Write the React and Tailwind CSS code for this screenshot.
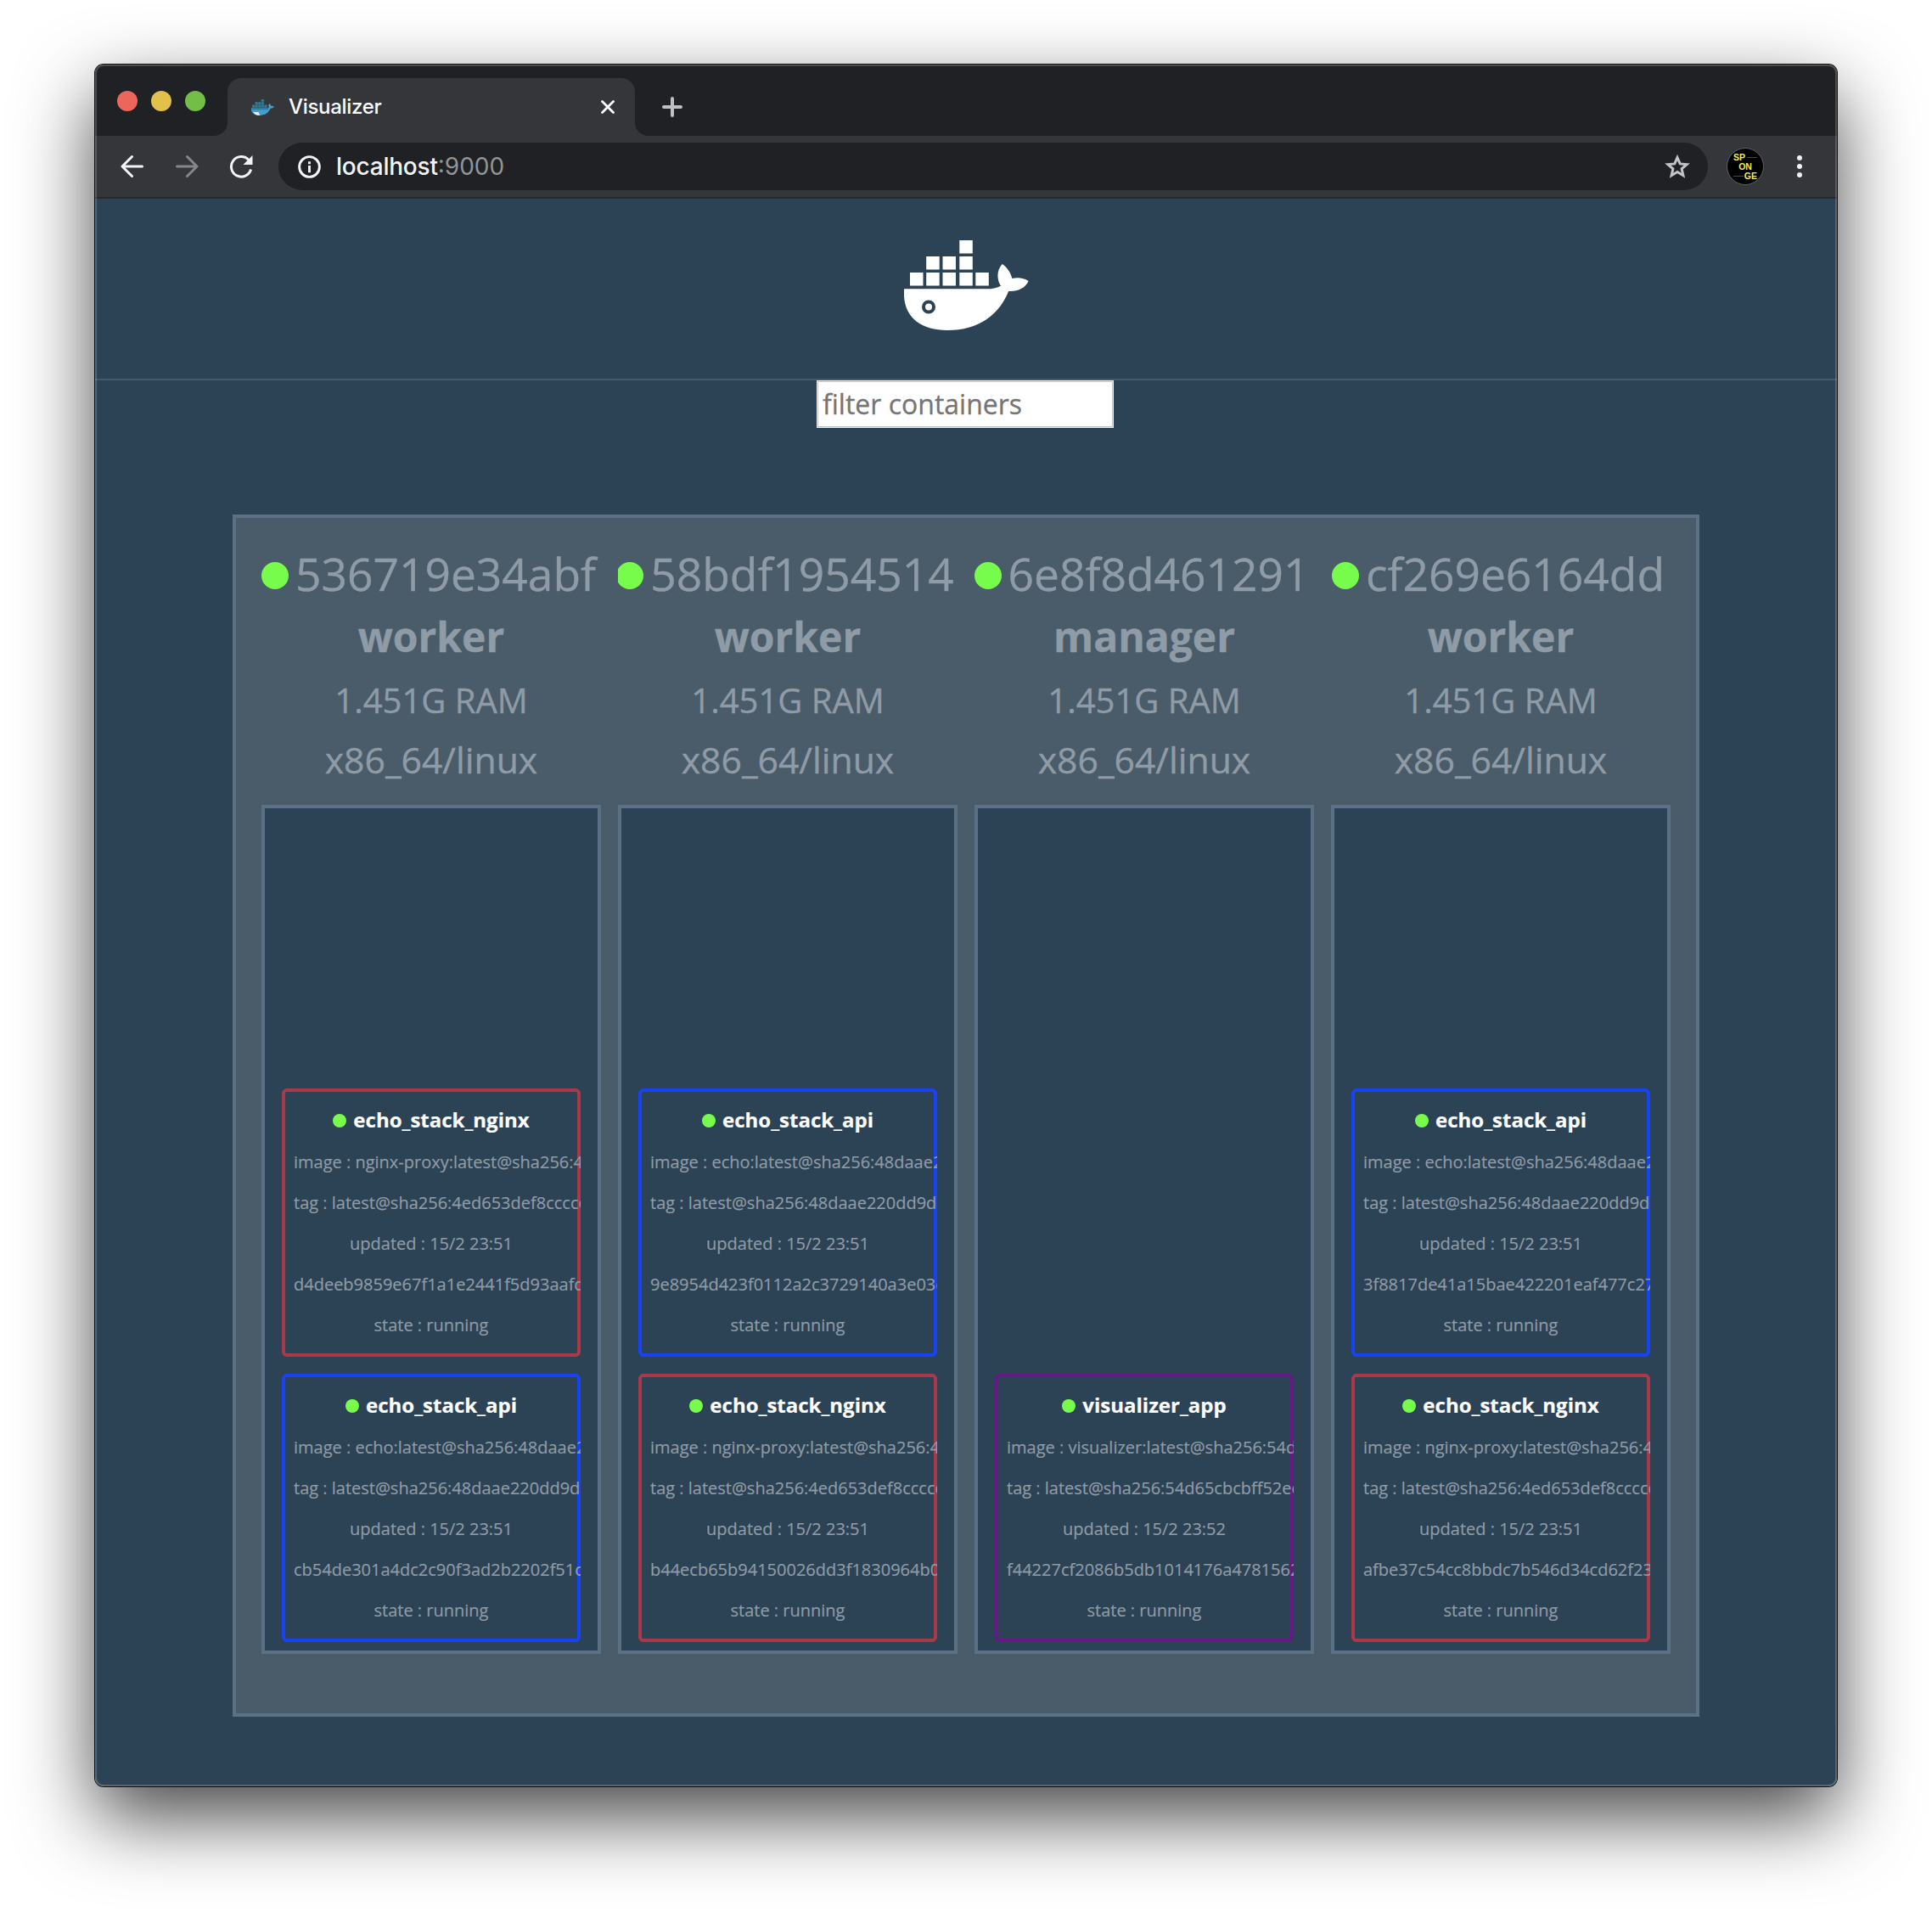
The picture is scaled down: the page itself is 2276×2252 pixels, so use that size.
import React from "react";

const RED = "inset-ring-[#a93a4c]";
const BLUE = "inset-ring-[#1742f5]";
const PURPLE = "inset-ring-[#651886]";

const nginx = (id) => ({
  name: "echo_stack_nginx", color: RED, image: "nginx-proxy:latest@sha256:4ed6",
  tag: "latest@sha256:4ed653def8cccce0", updated: "15/2 23:51", id,
});
const api = (id) => ({
  name: "echo_stack_api", color: BLUE, image: "echo:latest@sha256:48daae220d",
  tag: "latest@sha256:48daae220dd9db1", updated: "15/2 23:51", id,
});

const nodes = [
  { host: "536719e34abf", role: "worker", tasks: [nginx("d4deeb9859e67f1a1e2441f5d93aafc0"), api("cb54de301a4dc2c90f3ad2b2202f51c8")] },
  { host: "58bdf1954514", role: "worker", tasks: [api("9e8954d423f0112a2c3729140a3e03c1"), nginx("b44ecb65b94150026dd3f1830964b0a2")] },
  {
    host: "6e8f8d461291", role: "manager",
    tasks: [{ name: "visualizer_app", color: PURPLE, image: "visualizer:latest@sha256:54d65c", tag: "latest@sha256:54d65cbcbff52ec0", updated: "15/2 23:52", id: "f44227cf2086b5db1014176a4781562b" }],
  },
  { host: "cf269e6164dd", role: "worker", tasks: [api("3f8817de41a15bae422201eaf477c27e"), nginx("afbe37c54cc8bbdc7b546d34cd62f23b")] },
];

function Task({ task }) {
  return (
    <div className={`h-[316px] w-[352px] shrink-0 overflow-hidden rounded-[6px] px-[14px] pt-[13px] text-left text-[20px] leading-[48px] text-[#8f9ba6] inset-ring-4 [-webkit-text-stroke:0.2px] ${task.color}`}>
      <div className="mb-px flex h-[49px] items-center justify-center gap-2 text-[24px] font-bold text-white">
        <span className="size-4 shrink-0 rounded-full bg-[#77fc4c]" />
        <span className="-mt-[2px]">{task.name}</span>
      </div>
      <div className="whitespace-nowrap">image : {task.image}</div>
      <div className="whitespace-nowrap">tag : {task.tag}</div>
      <div className="text-center">updated : {task.updated}</div>
      <div className="whitespace-nowrap">{task.id}</div>
      <div className="text-center">state : running</div>
    </div>
  );
}

function Node({ node }) {
  return (
    <div className="flex w-[400px] flex-col text-center text-[#8f9ba6] [-webkit-text-stroke:0.4px]">
      <div className="flex h-[72px] items-center justify-center gap-2 overflow-hidden pr-[6px] text-[53.330px] leading-[72px]">
        <span className="mt-1 size-8 shrink-0 rounded-full bg-[#77fc4c]" />
        <span>{node.host}</span>
      </div>
      <div className="h-[77px] text-[48px] leading-[76px] font-bold">{node.role}</div>
      <div className="h-[71px] text-[40px] leading-[72px]">1.451G RAM</div>
      <div className="h-[88px] text-[42.670px] leading-[70px]">x86_64/linux</div>
      <div className="flex h-[1000px] flex-col items-center justify-end gap-5 border-4 border-[#5a7186] bg-[#2c4255] pb-[10px]">
        {node.tasks.map((t) => <Task key={t.id} task={t} />)}
      </div>
    </div>
  );
}

const CONTAINERS = "M65.300 0h15.500v15.500h-15.500z M26.200 19h15.500v15.500h-15.500z M45.500 19h15.500v15.500h-15.500z M65.300 19h15.500v15.500h-15.500z M7 38h15.500v15.500h-15.500z M26.200 38h15.500v15.500h-15.500z M45.500 38h15.500v15.500h-15.500z M65.300 38h15.500v15.500h-15.500z M84.300 38h15.500v15.500h-15.500z";
const BODY = "M.1 57.300H98c6 0 10.500-1 16-3.600c-5-8-5-18 1.600-25.700c6 4 10 10 11.800 17c6-1.500 14-.8 19.200 3c-3.500 8-12 12.500-23.500 12C112 88 88 106 51 106C19 106-2.400 90 .1 57.300z";
const EYE = "M29 70.500a8 8 0 1 0 0 16a8 8 0 1 0 0-16zM29 74.500a4 4 0 1 1 0 8a4 4 0 1 1 0-8z";

function Logo() {
  return (
    <svg className="h-[107px] w-[147px] text-white" viewBox="0 0 147 107" fill="currentColor">
      <path d={CONTAINERS} />
      <path fillRule="evenodd" d={BODY + EYE} />
    </svg>
  );
}

function Favicon() {
  return (
    <svg className="h-[19px] w-[27px]" viewBox="0 0 147 107" preserveAspectRatio="none">
      <path d={CONTAINERS} fill="#3b8199" stroke="#2f6b80" strokeWidth="4" />
      <path d={BODY} fill="#429fd2" />
      <path d="M3 57h108l-4 12H3z" fill="#2c7a9d" />
      <path d="M12 84c12 2 26 1 34 0c2 8 6 16 12 22C36 108 20 98 12 84z" fill="#e8f1f5" />
    </svg>
  );
}

function TabStrip() {
  return (
    <div className="flex h-[84px] items-end bg-[#202124]">
      <div className="flex h-[84px] w-[156px] gap-4 pt-[31px] pl-[26px]">
        <span className="size-6 rounded-full bg-[#ed665c]" />
        <span className="size-6 rounded-full bg-[#e1c04c]" />
        <span className="size-6 rounded-full bg-[#72be47]" />
      </div>
      <div className="relative flex h-[68px] w-[480px] items-center rounded-t-2xl bg-[#35363a] pl-7 text-white">
        <svg className="absolute bottom-0 -left-4 size-4" viewBox="0 0 16 16" fill="#35363a"><path d="M16 0v16H0A16 16 0 0 0 16 0z" /></svg>
        <svg className="absolute -right-4 bottom-0 size-4" viewBox="0 0 16 16" fill="#35363a"><path d="M0 0v16h16A16 16 0 0 1 0 0z" /></svg>
        <Favicon />
        <span className="ml-[17px] grow font-[Inter] text-[24px] font-medium tracking-[-0.013em]">Visualizer</span>
        <svg className="mr-6 size-4" viewBox="0 0 16 16" fill="none" stroke="currentColor" strokeWidth="2.800" strokeLinecap="round"><path d="M1.500 1.500l13 13M14.500 1.500l-13 13" /></svg>
      </div>
      <svg className="mb-[22px] ml-8 size-6" viewBox="0 0 24 24" fill="none" stroke="#bdc1c6" strokeWidth="4" strokeLinecap="round"><path d="M12 2v20M2 12h20" /></svg>
    </div>
  );
}

function Toolbar() {
  return (
    <div className="flex h-[74px] items-center border-b-2 border-[#28292c] bg-[#35363a] text-[#f1f3f4]">
      <svg className="ml-[30px] size-[28px]" viewBox="0 0 28 28" fill="none" stroke="currentColor" strokeWidth="3" strokeLinecap="round" strokeLinejoin="round"><path d="M25.500 14H2.500M13.500 2.500L2 14l11.500 11.500" /></svg>
      <svg className="ml-[36px] size-[28px]" viewBox="0 0 28 28" fill="none" stroke="#85868a" strokeWidth="3" strokeLinecap="round" strokeLinejoin="round"><path d="M2.500 14h23M14.500 2.500l11.500 11.500l-11.500 11.500" /></svg>
      <svg className="ml-[36px] size-[28px]" viewBox="0 0 28 28" fill="none" stroke="currentColor" strokeWidth="3"><path d="M25.600 17.500A11.800 11.800 0 1 1 23 6.400" /><path d="M27.500 1v11h-11z" fill="currentColor" stroke="none" /></svg>
      <div className="ml-[30px] flex h-14 w-[1684px] items-center rounded-full bg-[#202124] pl-[23px]">
        <svg className="size-[27px]" viewBox="0 0 28 28" fill="none" stroke="currentColor" strokeWidth="3"><circle cx="14" cy="14" r="12.300" /><path d="M14 12.500v8.500M14 7.500v3" /></svg>
        <span className="ml-[18px] grow font-[Inter] text-[28px] font-medium tracking-[-0.008em]">localhost<span className="font-normal tracking-normal text-[#929498]">:9000</span></span>
        <svg className="mr-[21px] size-[30px]" viewBox="0 0 30 30" fill="none" stroke="#c3c4c7" strokeWidth="3"><path d="M15 4.500l3.200 7.400l8 .7l-6.100 5.300l1.800 7.800L15 21.500l-6.900 4.200l1.800-7.800l-6.100-5.300l8-.7z" /></svg>
      </div>
      <div className="relative ml-[22px] flex size-11 shrink-0 flex-col justify-center rounded-full border border-[#606164] bg-black px-[7px] font-['Liberation_Sans'] text-[10.500px] leading-[11px] font-bold text-[#f4f04a]">
        <span>SP</span>
        <span className="text-center">ON</span>
        <span className="text-right">GE</span>
        <i className="absolute top-[10px] left-[23px] h-px w-3 bg-[#4a4a4a]" />
        <i className="absolute top-[32px] left-[7px] h-px w-3 bg-[#4a4a4a]" />
      </div>
      <div className="ml-[39px] flex flex-col gap-1">
        <span className="size-[6px] rounded-full bg-[#f1f3f4]" />
        <span className="size-[6px] rounded-full bg-[#f1f3f4]" />
        <span className="size-[6px] rounded-full bg-[#f1f3f4]" />
      </div>
    </div>
  );
}

export default function App() {
  return (
    <div className="h-[2252px] w-[2276px] overflow-hidden bg-white px-28 pt-[76px] font-['Open_Sans',sans-serif]">
      <div className="relative h-[2028px] w-[2052px] rounded-[10px] shadow-[0_0_0_1px_rgba(0,0,0,0.9),0_36px_90px_rgba(0,0,0,0.73)]">
        <div className="flex h-full flex-col overflow-hidden rounded-[10px] bg-[#2c4255]">
          <TabStrip />
          <Toolbar />
          <header className="flex h-[214px] shrink-0 justify-center border-b-2 border-[#435a69] pt-[49px]">
            <Logo />
          </header>
          <input placeholder="filter containers" className="ml-[850px] h-14 w-[350px] shrink-0 border border-[#f4f2f1] bg-white px-[6px] pb-[2px] text-[32px] outline-none inset-ring inset-ring-[#c5c0bc] [-webkit-text-stroke:0.3px] placeholder:text-[#757575]" />
          <main className="mt-[102px] ml-[162px] flex h-[1416px] w-[1728px] shrink-0 gap-5 border-4 border-[#5a7186] bg-[#4a5c6a] px-[30px] pt-[30px]">
            {nodes.map((n) => <Node key={n.host} node={n} />)}
          </main>
        </div>
        <div className="pointer-events-none absolute inset-0 rounded-[10px] border-2 border-white/20" />
      </div>
    </div>
  );
}
